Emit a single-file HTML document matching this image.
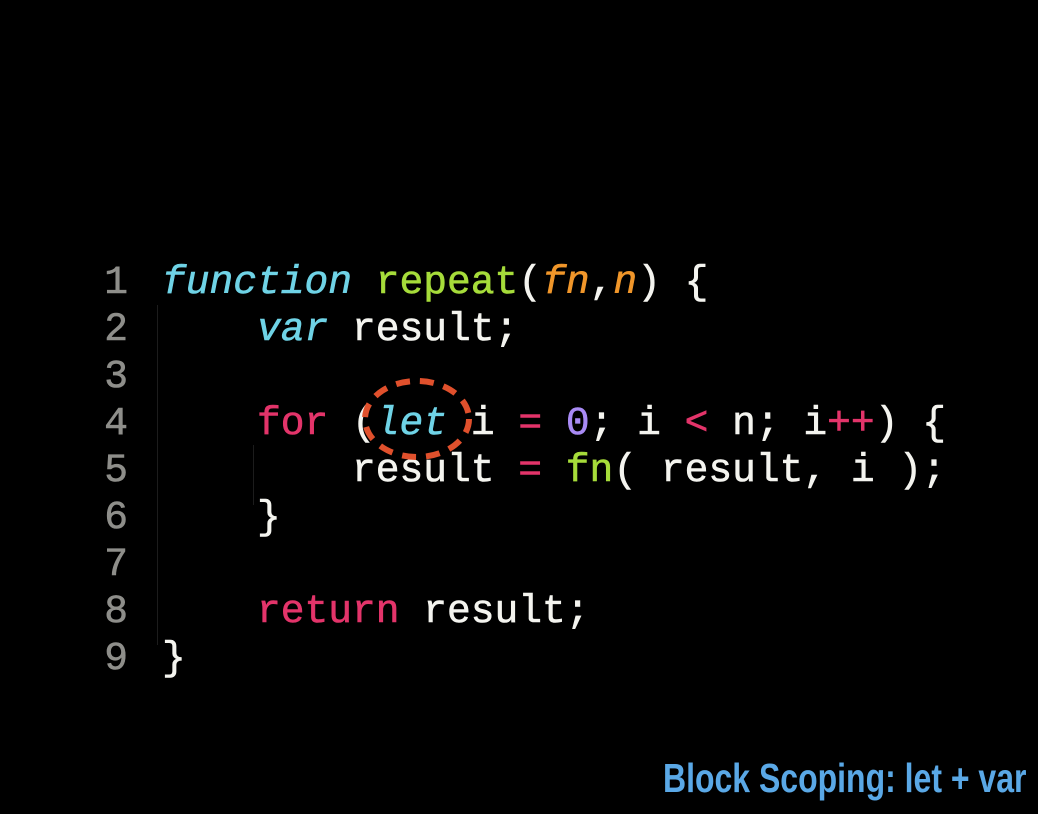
<!DOCTYPE html>
<html><head><meta charset="utf-8"><style>
html,body{margin:0;padding:0;background:#000;width:1038px;height:814px;overflow:hidden;position:relative}
.code{position:absolute;left:0;top:259px;font-family:"Liberation Mono","DejaVu Sans Mono",monospace;font-size:39.6px;line-height:47px;color:#f4f4ef;white-space:pre;-webkit-text-stroke:0.6px currentColor}
.ln{position:absolute;left:104px;width:24px;color:#8e8e8a;text-align:right}
.l{position:absolute;left:162px}
.k{color:#6fd3e6;font-style:italic}
.g{color:#a6dc3a}
.o{color:#f0962a;font-style:italic}
.p{color:#e3346a}
.v{color:#a98bf5}
.guide{position:absolute;width:1px;background:#1c1c1c}
.title{position:absolute;left:663px;top:755px;font-family:"Liberation Sans Narrow","Liberation Sans",sans-serif;font-weight:bold;font-size:41px;line-height:46px;color:#5aa8e6;white-space:nowrap;transform-origin:left top;transform:scaleX(0.78)}
</style></head><body>
<div class="guide" style="left:157px;top:305px;height:340px"></div>
<div class="guide" style="left:253px;top:445px;height:60px"></div>
<div class="code">
<div class="ln" style="top:0">1</div><div class="l" style="top:0"><span class="k">function</span> <span class="g">repeat</span>(<span class="o">fn</span>,<span class="o">n</span>) {</div>
<div class="ln" style="top:47px">2</div><div class="l" style="top:47px">    <span class="k">var</span> result;</div>
<div class="ln" style="top:94px">3</div>
<div class="ln" style="top:141px">4</div><div class="l" style="top:141px">    <span class="p">for</span> (<span class="k">let</span> i <span class="p">=</span> <span class="v">0</span>; i <span class="p">&lt;</span> n; i<span class="p">++</span>) {</div>
<div class="ln" style="top:188px">5</div><div class="l" style="top:188px">        result <span class="p">=</span> <span class="g">fn</span>( result, i );</div>
<div class="ln" style="top:235px">6</div><div class="l" style="top:235px">    }</div>
<div class="ln" style="top:282px">7</div>
<div class="ln" style="top:329px">8</div><div class="l" style="top:329px">    <span class="p">return</span> result;</div>
<div class="ln" style="top:376px">9</div><div class="l" style="top:376px">}</div>
</div>
<svg style="position:absolute;left:0;top:0" width="1038" height="814"><ellipse cx="417" cy="419" rx="52" ry="38" fill="none" stroke="#e0502c" stroke-width="6" stroke-dasharray="14 10"/></svg>
<div class="title">Block Scoping: let + var</div>
</body></html>
